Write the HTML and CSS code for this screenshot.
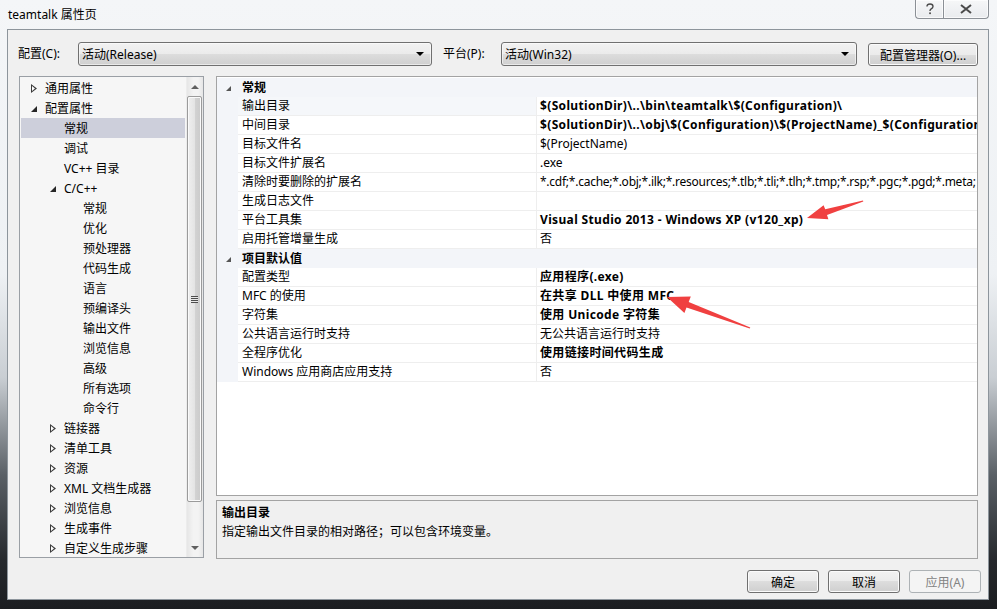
FILE: index.html
```html
<!DOCTYPE html>
<html lang="zh-CN">
<head>
<meta charset="utf-8">
<title>teamtalk 属性页</title>
<link rel="stylesheet" href="styles.css">
</head>
<body>
<div class="window">
  <div class="titlebar">
    <span class="title">teamtalk 属性页</span>
    <div class="caps">
      <div class="cap help">
        <svg width="10" height="12" viewBox="0 0 10 12"><path d="M2 3.5 Q2 1 5 1 Q8 1 8 3.5 Q8 5 6 6 Q5 6.6 5 8" fill="none" stroke="#4a4a4a" stroke-width="1.4"/><rect x="4.2" y="9.4" width="1.7" height="1.7" fill="#4a4a4a"/></svg>
      </div>
      <div class="cap close">
        <svg width="12" height="10" viewBox="0 0 12 10"><path d="M1 1 L11 9 M11 1 L1 9" stroke="#4a4a4a" stroke-width="2"/></svg>
      </div>
    </div>
  </div>
  <div class="client">
    <div class="toprow">
      <span class="lbl l1">配置(C):</span>
      <div class="combo c1"><span class="ctext">活动(Release)</span><span class="drop"></span></div>
      <span class="lbl l2">平台(P):</span>
      <div class="combo c2"><span class="ctext">活动(Win32)</span><span class="drop"></span></div>
      <div class="btn mgr">配置管理器(O)...</div>
    </div>
    <div class="main">
      <div class="tree">
        <div class="tree-list">
          <div class="trow lv0"><span class="tw"><span class="tri-c"></span></span>通用属性</div>
          <div class="trow lv0"><span class="tw"><span class="tri-e"></span></span>配置属性</div>
          <div class="trow lv1 sel"><span class="tw"></span>常规</div>
          <div class="trow lv1"><span class="tw"></span>调试</div>
          <div class="trow lv1"><span class="tw"></span>VC++ 目录</div>
          <div class="trow lv1"><span class="tw"><span class="tri-e"></span></span>C/C++</div>
          <div class="trow lv2"><span class="tw"></span>常规</div>
          <div class="trow lv2"><span class="tw"></span>优化</div>
          <div class="trow lv2"><span class="tw"></span>预处理器</div>
          <div class="trow lv2"><span class="tw"></span>代码生成</div>
          <div class="trow lv2"><span class="tw"></span>语言</div>
          <div class="trow lv2"><span class="tw"></span>预编译头</div>
          <div class="trow lv2"><span class="tw"></span>输出文件</div>
          <div class="trow lv2"><span class="tw"></span>浏览信息</div>
          <div class="trow lv2"><span class="tw"></span>高级</div>
          <div class="trow lv2"><span class="tw"></span>所有选项</div>
          <div class="trow lv2"><span class="tw"></span>命令行</div>
          <div class="trow lv1"><span class="tw"><span class="tri-c"></span></span>链接器</div>
          <div class="trow lv1"><span class="tw"><span class="tri-c"></span></span>清单工具</div>
          <div class="trow lv1"><span class="tw"><span class="tri-c"></span></span>资源</div>
          <div class="trow lv1"><span class="tw"><span class="tri-c"></span></span>XML 文档生成器</div>
          <div class="trow lv1"><span class="tw"><span class="tri-c"></span></span>浏览信息</div>
          <div class="trow lv1"><span class="tw"><span class="tri-c"></span></span>生成事件</div>
          <div class="trow lv1"><span class="tw"><span class="tri-c"></span></span>自定义生成步骤</div>
        </div>
        <div class="vscroll">
          <div class="sarrow up"></div>
          <div class="strack">
            <div class="thumb"><span class="grip"></span></div>
          </div>
          <div class="sarrow down"></div>
        </div>
      </div>
      <div class="rightcol">
        <div class="grid">
          <div class="grow cat"><span class="gut"><span class="tri-g"></span></span><span class="catname">常规</span></div>
          <div class="grow selrow"><span class="gut"></span><span class="name">输出目录</span><span class="val b">$(SolutionDir)\..\bin\teamtalk\$(Configuration)\</span></div>
          <div class="grow"><span class="gut"></span><span class="name">中间目录</span><span class="val b">$(SolutionDir)\..\obj\$(Configuration)\$(ProjectName)_$(Configuration)\</span></div>
          <div class="grow"><span class="gut"></span><span class="name">目标文件名</span><span class="val">$(ProjectName)</span></div>
          <div class="grow"><span class="gut"></span><span class="name">目标文件扩展名</span><span class="val">.exe</span></div>
          <div class="grow"><span class="gut"></span><span class="name">清除时要删除的扩展名</span><span class="val tight">*.cdf;*.cache;*.obj;*.ilk;*.resources;*.tlb;*.tli;*.tlh;*.tmp;*.rsp;*.pgc;*.pgd;*.meta;</span></div>
          <div class="grow"><span class="gut"></span><span class="name">生成日志文件</span><span class="val"></span></div>
          <div class="grow"><span class="gut"></span><span class="name">平台工具集</span><span class="val b">Visual Studio 2013 - Windows XP (v120_xp)</span></div>
          <div class="grow"><span class="gut"></span><span class="name">启用托管增量生成</span><span class="val">否</span></div>
          <div class="grow cat"><span class="gut"><span class="tri-g"></span></span><span class="catname">项目默认值</span></div>
          <div class="grow"><span class="gut"></span><span class="name">配置类型</span><span class="val b">应用程序(.exe)</span></div>
          <div class="grow"><span class="gut"></span><span class="name">MFC 的使用</span><span class="val b">在共享 DLL 中使用 MFC</span></div>
          <div class="grow"><span class="gut"></span><span class="name">字符集</span><span class="val b">使用 Unicode 字符集</span></div>
          <div class="grow"><span class="gut"></span><span class="name">公共语言运行时支持</span><span class="val">无公共语言运行时支持</span></div>
          <div class="grow"><span class="gut"></span><span class="name">全程序优化</span><span class="val b">使用链接时间代码生成</span></div>
          <div class="grow"><span class="gut"></span><span class="name">Windows 应用商店应用支持</span><span class="val">否</span></div>
        </div>
        <div class="desc">
          <div class="dtitle">输出目录</div>
          <div class="dtext">指定输出文件目录的相对路径；可以包含环境变量。</div>
        </div>
      </div>
    </div>
    <div class="buttons">
      <div class="btn okb">确定</div>
      <div class="btn okb">取消</div>
      <div class="btn okb dis">应用(A)</div>
    </div>
  </div>
  <svg class="arrows" width="997" height="609" viewBox="0 0 997 609">
    <polygon fill="#f04040" points="863,200.4 825.2,209.3 823.6,205.2 807,218 828.4,219.2 827,215.1 863.3,201.6"/>
    <polygon fill="#f04040" points="750.3,327.4 688.7,301.9 690.8,296.5 667,297 684.4,312.9 686.5,307.5 749.7,328.6"/>
  </svg>
</div>
</body>
</html>
```

FILE: styles.css
```css
html, body {
  margin: 0;
  padding: 0;
}

body {
  width: 997px;
  height: 609px;
  overflow: hidden;
}

.window {
  position: relative;
  width: 997px;
  height: 609px;
  display: flex;
  flex-direction: column;
  box-sizing: border-box;
  background: linear-gradient(to bottom, #f4f6f8 0, #eef1f4 45%, #c9ced3 62%, #5a6066 78%, #26292d 92%, #1b1d20 100%);
  font-family: "Noto Sans", "Noto Sans CJK SC", sans-serif;
  font-size: 12px;
  color: #000;
  overflow: hidden;
}

/* title bar */
.titlebar {
  height: 29px;
  flex: none;
  display: flex;
  align-items: flex-start;
  padding: 0 8px 0 8px;
  box-sizing: border-box;
}

.title {
  line-height: 29px;
  font-size: 12px;
  color: #000;
}

.caps {
  margin-left: auto;
  display: flex;
  height: 19px;
}

.cap {
  height: 19px;
  box-sizing: border-box;
  border: 1px solid #8b9096;
  border-top: none;
  background: linear-gradient(to bottom, #f6f7f8, #e9ebee);
  display: flex;
  align-items: center;
  justify-content: center;
  box-shadow: inset 0 0 0 1px rgba(255,255,255,0.7);
}

.help {
  width: 28px;
  border-radius: 0 0 0 4px;
  border-right: none;
}

.close {
  width: 46px;
  border-radius: 0 0 4px 0;
}

/* client area */
.client {
  flex: 1;
  margin: 0 8px 9px 7px;
  border: 1px solid #8d959c;
  background: #f0f0f0;
  display: flex;
  flex-direction: column;
  padding: 12px 7px 0 11px;
  min-height: 0;
}

.toprow {
  display: flex;
  align-items: center;
  height: 24px;
  flex: none;
}

.lbl {
  white-space: nowrap;
  line-height: 24px;
}

.l1 {
  width: 60px;
  margin-left: -1px;
}

.l2 {
  width: 58px;
  margin-left: 11px;
}

.combo {
  height: 24px;
  box-sizing: border-box;
  border: 1px solid #707070;
  border-radius: 3px;
  background: linear-gradient(to bottom, #f2f2f2 0, #ebebeb 50%, #dddddd 50%, #cfcfcf 100%);
  box-shadow: inset 0 0 0 1px rgba(255,255,255,0.55);
  display: flex;
  align-items: center;
  padding: 0 7px 0 3px;
}

.c1 { width: 354px; }
.c2 { width: 356px; }

.ctext {
  flex: 1;
  white-space: nowrap;
}

.drop {
  width: 0;
  height: 0;
  border-left: 4px solid transparent;
  border-right: 4px solid transparent;
  border-top: 4px solid #000;
}

.btn {
  height: 23px;
  box-sizing: border-box;
  border: 1px solid #707070;
  border-radius: 3px;
  background: linear-gradient(to bottom, #f2f2f2 0, #ebebeb 50%, #dddddd 50%, #cfcfcf 100%);
  box-shadow: inset 0 0 0 1px #fbfbfb;
  display: flex;
  align-items: center;
  justify-content: center;
  white-space: nowrap;
}

.mgr {
  width: 110px;
  margin-left: 11px;
  margin-top: 1px;
}

/* main */
.main {
  display: flex;
  margin-top: 10px;
  flex: none;
}

.tree {
  width: 185px;
  height: 482px;
  box-sizing: border-box;
  border: 1px solid #9a9fa5;
  background: #f6f6f6;
  display: flex;
}

.tree-list {
  flex: 1;
  padding: 1px 1px 0 1px;
  overflow: hidden;
}

.trow {
  height: 20px;
  display: flex;
  align-items: center;
  white-space: nowrap;
  padding-left: 10px;
}

.trow.lv1 { padding-left: 29px; }
.trow.lv2 { padding-left: 48px; }

.trow.sel {
  background: #cdcfdb;
}

.tw {
  width: 14px;
  height: 20px;
  flex: none;
  position: relative;
}

.tri-c {
  position: absolute;
  left: 0;
  top: 6px;
  width: 6px;
  height: 9px;
  background: #3c3c3c;
  clip-path: polygon(0 0, 100% 50%, 0 100%);
}

.tri-c::after {
  content: "";
  position: absolute;
  left: 1px;
  top: 2px;
  width: 3px;
  height: 5px;
  background: #fff;
  clip-path: polygon(0 0, 100% 50%, 0 100%);
}

.tri-e {
  position: absolute;
  left: 0;
  top: 8px;
  width: 6px;
  height: 6px;
  background: #262626;
  clip-path: polygon(100% 0, 100% 100%, 0 100%);
}

/* scrollbar */
.vscroll {
  width: 16px;
  flex: none;
  display: flex;
  flex-direction: column;
  background: linear-gradient(to right, #e6e6e6, #f3f3f3 40%, #f3f3f3 70%, #e6e6e6);
  border-left: 1px solid #ececec;
}

.sarrow {
  height: 18px;
  flex: none;
  position: relative;
}

.sarrow::after {
  content: "";
  position: absolute;
  left: 4px;
  width: 0;
  height: 0;
  border-left: 4px solid transparent;
  border-right: 4px solid transparent;
}

.sarrow.up::after {
  top: 8px;
  border-bottom: 4px solid #606060;
}

.sarrow.down::after {
  top: 7px;
  border-top: 4px solid #606060;
}

.strack {
  flex: 1;
  padding: 1px 1px 0 0;
  display: flex;
  flex-direction: column;
}

.thumb {
  height: 406px;
  box-sizing: border-box;
  border: 1px solid #9b9b9b;
  border-radius: 2px;
  background: linear-gradient(to right, #efefef, #e4e4e4 50%, #d3d3d3 51%, #cacaca);
  box-shadow: inset 0 0 0 1px #fafafa;
  display: flex;
  align-items: center;
  justify-content: center;
}

.grip {
  width: 7px;
  height: 7px;
  background: repeating-linear-gradient(to bottom, #4d4d4d 0, #4d4d4d 1px, #e8e8e8 1px, #e8e8e8 2px);
}

/* right column */
.rightcol {
  margin-left: 12px;
  width: 762px;
  display: flex;
  flex-direction: column;
}

.grid {
  height: 420px;
  box-sizing: border-box;
  border: 1px solid #a3a3a3;
  background: #fff;
  padding-top: 1px;
  overflow: hidden;
}

.grow {
  height: 19px;
  display: flex;
  white-space: nowrap;
}

.gut {
  width: 21px;
  flex: none;
  background: #f3f5f9;
  position: relative;
}

.name {
  width: 299px;
  flex: none;
  box-sizing: border-box;
  padding-left: 4px;
  line-height: 18px;
  border-bottom: 1px solid #eeeeee;
  border-right: 1px solid #eeeeee;
  overflow: hidden;
}

.selrow .name {
  background: #f5f7fa;
}

.val {
  flex: 1;
  min-width: 0;
  box-sizing: border-box;
  padding-left: 3px;
  line-height: 18px;
  border-bottom: 1px solid #eeeeee;
  overflow: hidden;
}

.val.b {
  font-weight: bold;
  letter-spacing: 0.35px;
}

.val.tight {
  letter-spacing: -0.25px;
}

.grow.cat {
  background: #f3f5f9;
}

.catname {
  padding-left: 4px;
  font-weight: bold;
  line-height: 19px;
}

.tri-g {
  position: absolute;
  left: 9px;
  top: 8px;
  width: 5px;
  height: 5px;
  background: #555;
  clip-path: polygon(100% 0, 100% 100%, 0 100%);
}

.desc {
  margin-top: 4px;
  height: 59px;
  box-sizing: border-box;
  border: 1px solid #a3a3a3;
  background: #f0f0f0;
  padding: 3px 5px 0 5px;
}

.dtitle {
  font-weight: bold;
  line-height: 18px;
}

.dtext {
  line-height: 20px;
}

/* bottom buttons */
.buttons {
  display: flex;
  justify-content: flex-end;
  gap: 9px;
  margin-top: 11px;
  flex: none;
}

.okb {
  width: 72px;
}

.okb.dis {
  border-color: #adb2b5;
  background: #f4f4f4;
  box-shadow: none;
  color: #838383;
}

/* overlay annotation arrows */
.arrows {
  position: absolute;
  left: 0;
  top: 0;
  pointer-events: none;
}
```
